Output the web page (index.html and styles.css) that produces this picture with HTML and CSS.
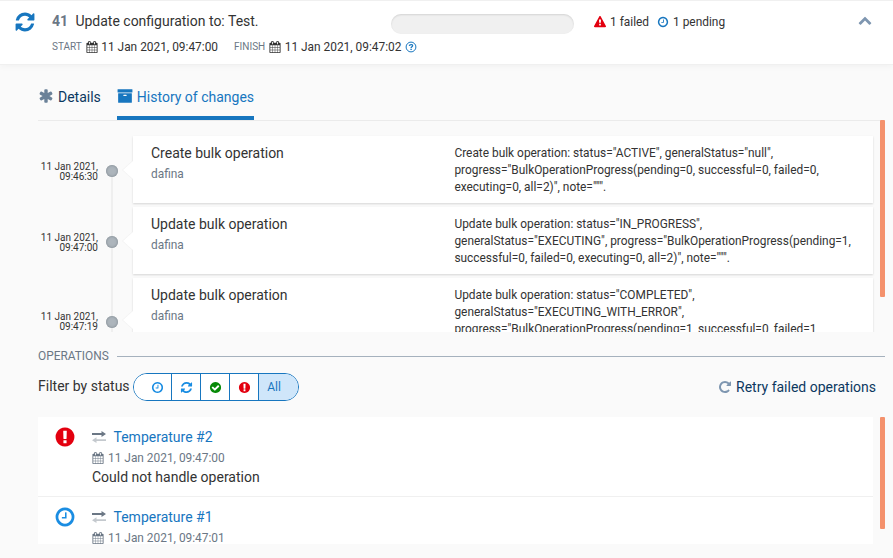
FILE: index.html
```html
<!DOCTYPE html>
<html lang="en">
<head>
<meta charset="utf-8">
<title>Bulk operations</title>
<link rel="stylesheet" href="styles.css">
</head>
<body>
<svg class="sprite" aria-hidden="true">
  <symbol id="refresh" viewBox="0 0 1792 1792"><path d="M1639 1056q0 5-1 7-64 268-268 434.5t-478 166.5q-146 0-282.5-55t-243.5-157l-129 129q-19 19-45 19t-45-19-19-45v-448q0-26 19-45t45-19h448q26 0 45 19t19 45-19 45l-137 137q71 66 161 102t187 36q134 0 250-65t186-179q11-17 53-117 8-23 30-23h192q13 0 22.5 9.5t9.5 22.5zm25-800v448q0 26-19 45t-45 19h-448q-26 0-45-19t-19-45 19-45l138-138q-148-137-349-137-134 0-250 65t-186 179q-11 17-53 117-8 23-30 23h-199q-13 0-22.5-9.5t-9.5-22.5v-7q65-268 270-434.5t480-166.5q146 0 284 55.5t245 156.5l130-129q19-19 45-19t45 19 19 45z"/></symbol>
  <symbol id="clock" viewBox="0 0 1792 1792"><path d="M1024 544v448q0 14-9 23t-23 9h-320q-14 0-23-9t-9-23v-64q0-14 9-23t23-9h224v-352q0-14 9-23t23-9h64q14 0 23 9t9 23zm416 352q0-148-73-273t-198-198-273-73-273 73-198 198-73 273 73 273 198 198 273 73 273-73 198-198 73-273zm224 0q0 209-103 385.5t-279.5 279.5-385.5 103-385.5-103-279.5-279.5-103-385.5 103-385.5 279.5-279.5 385.5-103 385.5 103 279.5 279.5 103 385.5z"/></symbol>
  <symbol id="alert" viewBox="0 0 1792 1792"><path d="M896 128q209 0 385.5 103t279.5 279.5 103 385.5-103 385.5-279.5 279.5-385.5 103-385.5-103-279.5-279.5-103-385.5 103-385.5 279.5-279.5 385.5-103zm128 1247v-190q0-14-9-23.5t-22-9.5h-192q-13 0-23 10t-10 23v190q0 13 10 23t23 10h192q13 0 22-9.5t9-23.5zm-2-344l18-621q0-12-10-18-10-8-24-8h-220q-14 0-24 8-10 6-10 18l17 621q0 10 10 17.5t24 7.5h185q14 0 23.5-7.5t10.5-17.5z"/></symbol>
  <symbol id="warning" viewBox="0 0 1792 1792"><path d="M1024 1375v-190q0-14-9.5-23.5t-22.5-9.5h-192q-13 0-22.5 9.5t-9.5 23.5v190q0 14 9.5 23.5t22.5 9.5h192q13 0 22.5-9.5t9.5-23.5zm-2-374l18-459q0-12-10-19-13-11-24-11h-220q-11 0-24 11-10 7-10 21l17 457q0 10 10 16.5t24 6.5h185q14 0 23.5-6.5t10.5-16.5zm-14-934l768 1408q35 63-2 126-17 29-46.5 46t-63.5 17h-1536q-34 0-63.5-17t-46.5-46q-37-63-2-126l768-1408q17-31 47-49t65-18 65 18 47 49z"/></symbol>
  <symbol id="check" viewBox="0 0 1792 1792"><path d="M1412 734q0-28-18-46l-91-90q-19-19-45-19t-45 19l-408 407-226-226q-19-19-45-19t-45 19l-91 90q-18 18-18 46 0 27 18 45l362 362q19 19 45 19 27 0 46-19l543-543q18-18 18-45zm252 162q0 209-103 385.5t-279.5 279.5-385.5 103-385.5-103-279.5-279.5-103-385.5 103-385.5 279.5-279.5 385.5-103 385.5 103 279.5 279.5 103 385.5z"/></symbol>
  <symbol id="repeat" viewBox="0 0 1792 1792"><path d="M1664 256v448q0 26-19 45t-45 19h-448q-42 0-59-40-17-39 14-69l138-138q-148-137-349-137-104 0-198.5 40.5t-163.5 109.5-109.5 163.5-40.5 198.5 40.5 198.5 109.5 163.5 163.5 109.5 198.5 40.5q119 0 225-52t179-147q7-10 23-12 15 0 25 9l137 138q9 8 9.5 20.5t-7.5 22.5q-109 132-264 204.5t-327 72.5q-156 0-298-61t-245-164-164-245-61-298 61-298 164-245 245-164 298-61q147 0 284.5 55.5t244.5 156.5l130-129q29-31 70-14 39 17 39 59z"/></symbol>
  <symbol id="calendar" viewBox="0 0 1792 1792"><path d="M192 1664h288v-288h-288v288zm352 0h320v-288h-320v288zm-352-352h288v-320h-288v320zm352 0h320v-320h-320v320zm-352-384h288v-288h-288v288zm736 736h320v-288h-320v288zm-384-736h320v-288h-320v288zm768 736h288v-288h-288v288zm-384-352h320v-320h-320v320zm-352-864v-288q0-13-9.5-22.5t-22.5-9.5h-64q-13 0-22.5 9.5t-9.5 22.5v288q0 13 9.5 22.5t22.5 9.5h64q13 0 22.5-9.5t9.5-22.5zm736 864h288v-320h-288v320zm-384-384h320v-288h-320v288zm384 0h288v-288h-288v288zm32-480v-288q0-13-9.5-22.5t-22.5-9.5h-64q-13 0-22.5 9.5t-9.5 22.5v288q0 13 9.5 22.5t22.5 9.5h64q13 0 22.5-9.5t9.5-22.5zm384-64v1280q0 52-38 90t-90 38h-1408q-52 0-90-38t-38-90v-1280q0-52 38-90t90-38h128v-96q0-66 47-113t113-47h64q66 0 113 47t47 113v96h384v-96q0-66 47-113t113-47h64q66 0 113 47t47 113v96h128q52 0 90 38t38 90z"/></symbol>
  <symbol id="chevron" viewBox="0 0 1792 1792"><path d="M1683 1331l-166 165q-19 19-45 19t-45-19l-531-531-531 531q-19 19-45 19t-45-19l-166-165q-19-19-19-45.5t19-45.5l742-741q19-19 45-19t45 19l742 741q19 19 19 45.5t-19 45.5z"/></symbol>
  <symbol id="asterisk" viewBox="0 0 1792 1792"><path d="M1546 1050q46 26 59.5 77.5t-12.5 97.5l-64 110q-26 46-77.5 59.5t-97.5-12.5l-266-153v307q0 52-38 90t-90 38h-128q-52 0-90-38t-38-90v-307l-266 153q-46 26-97.5 12.5t-77.5-59.5l-64-110q-26-46-12.5-97.5t59.5-77.5l266-154-266-154q-46-26-59.5-77.5t12.5-97.5l64-110q26-46 77.5-59.5t97.5 12.5l266 153v-307q0-52 38-90t90-38h128q52 0 90 38t38 90v307l266-153q46-26 97.5-12.5t77.5 59.5l64 110q26 46 12.5 97.5t-59.5 77.5l-266 154z"/></symbol>
  <symbol id="archive" viewBox="0 0 1792 1792"><path d="M1088 832q0-26-19-45t-45-19h-256q-26 0-45 19t-19 45 19 45 45 19h256q26 0 45-19t19-45zm576-192v960q0 26-19 45t-45 19h-1408q-26 0-45-19t-19-45v-960q0-26 19-45t45-19h1408q26 0 45 19t19 45zm64-448v256q0 26-19 45t-45 19h-1536q-26 0-45-19t-19-45v-256q0-26 19-45t45-19h1536q26 0 45 19t19 45z"/></symbol>
  <symbol id="question" viewBox="0 0 12 12"><circle cx="6" cy="6" r="4.9" fill="none" stroke="currentColor" stroke-width="1"/><path d="M4.3 4.8C4.5 3.1 7.7 3.1 7.6 4.8C7.6 5.8 6.1 5.8 6.1 7" fill="none" stroke="currentColor" stroke-width="1.3"/><path d="M5.4 7.7h1.4v1.3h-1.4z"/></symbol>
  <symbol id="exchange" viewBox="0 0 14 12"><path d="M0 2h9.5V0L14 3 9.5 6V4H0z"/><path class="faded" d="M14 8.3H4.5V6.3L0 9.2l4.5 2.8V10H14z"/></symbol>
</svg>

<header class="op-header">
  <svg class="icon op-icon"><use href="#refresh"/></svg>
  <div class="op-main">
    <div class="op-title"><b>41</b><span>Update configuration to: Test.</span></div>
    <div class="op-dates">
      <span class="caption">START</span><svg class="icon cal"><use href="#calendar"/></svg><span class="start">11 Jan 2021, 09:47:00</span>
      <span class="caption">FINISH</span><svg class="icon cal"><use href="#calendar"/></svg><span>11 Jan 2021, 09:47:02</span>
      <svg class="icon help"><use href="#question"/></svg>
    </div>
  </div>
  <div class="progress"></div>
  <div class="summary">
    <svg class="icon danger"><use href="#warning"/></svg><span class="failed">1 failed</span>
    <svg class="icon info"><use href="#clock"/></svg><span>1 pending</span>
  </div>
  <svg class="icon collapse"><use href="#chevron"/></svg>
</header>

<main class="content">
  <nav class="tabs">
    <a class="tab"><svg class="icon"><use href="#asterisk"/></svg>Details</a>
    <a class="tab active"><svg class="icon"><use href="#archive"/></svg>History of changes</a>
  </nav>

  <section class="scroll-area history">
    <div class="timeline">
      <article class="event">
        <time>11 Jan 2021, 09:46:30</time><div class="rail"><i class="dot"></i></div>
        <div class="card"><div class="who"><h4>Create bulk operation</h4><p>dafina</p></div>
          <p class="detail">Create bulk operation: status="ACTIVE", generalStatus="null", progress="BulkOperationProgress(pending=0, successful=0, failed=0, executing=0, all=2)", note=""".</p></div>
      </article>
      <article class="event">
        <time>11 Jan 2021, 09:47:00</time><div class="rail"><i class="dot"></i></div>
        <div class="card"><div class="who"><h4>Update bulk operation</h4><p>dafina</p></div>
          <p class="detail">Update bulk operation: status="IN_PROGRESS", generalStatus="EXECUTING", progress="BulkOperationProgress(pending=1, successful=0, failed=0, executing=0, all=2)", note=""".</p></div>
      </article>
      <article class="event tall">
        <time>11 Jan 2021, 09:47:19</time><div class="rail"><i class="dot"></i></div>
        <div class="card"><div class="who"><h4>Update bulk operation</h4><p>dafina</p></div>
          <p class="detail">Update bulk operation: status="COMPLETED", generalStatus="EXECUTING_WITH_ERROR", progress="BulkOperationProgress(pending=1, successful=0, failed=1,</p></div>
      </article>
    </div>
    <div class="thumb"></div>
  </section>

  <div class="legend"><span>OPERATIONS</span></div>

  <div class="filter-row">
    <span class="filter-label">Filter by status</span>
    <div class="btn-group">
      <button class="first"><svg class="icon blue"><use href="#clock"/></svg></button>
      <button><svg class="icon blue"><use href="#refresh"/></svg></button>
      <button><svg class="icon green"><use href="#check"/></svg></button>
      <button><svg class="icon danger"><use href="#alert"/></svg></button>
      <button class="all">All</button>
    </div>
    <a class="retry"><svg class="icon"><use href="#repeat"/></svg>Retry failed operations</a>
  </div>

  <section class="scroll-area operations">
    <div class="list">
      <div class="item">
        <svg class="icon status danger"><use href="#alert"/></svg>
        <div class="item-body">
          <div class="name"><svg class="exchange"><use href="#exchange"/></svg><a>Temperature #2</a></div>
          <div class="date"><svg class="icon cal"><use href="#calendar"/></svg>11 Jan 2021, 09:47:00</div>
          <div class="message">Could not handle operation</div>
        </div>
      </div>
      <div class="item">
        <svg class="icon status blue"><use href="#clock"/></svg>
        <div class="item-body">
          <div class="name"><svg class="exchange"><use href="#exchange"/></svg><a>Temperature #1</a></div>
          <div class="date"><svg class="icon cal"><use href="#calendar"/></svg>11 Jan 2021, 09:47:01</div>
        </div>
      </div>
    </div>
    <div class="thumb"></div>
  </section>
</main>
</body>
</html>
```
FILE: styles.css
```css
* { box-sizing: border-box; }
body {
  margin: 0;
  width: 893px;
  height: 558px;
  overflow: hidden;
  background: #fafafa;
  color: #333;
  font: 14px/20px Roboto, sans-serif;
}
h4, p { margin: 0; font-size: 14px; font-weight: 400; }
.sprite { display: none; }
.icon { width: 12px; height: 12px; fill: currentColor; flex: none; display: block; }
.danger { color: #e3000f; }
.blue { color: #1a8de2; }
.info { color: #1776bf; }
.green { color: #078a07; }

.op-header {
  display: flex;
  height: 65px;
  padding: 10px 20px 0 14px;
  background: #fff;
  border-top: 1px solid #f0f0f0;
  border-bottom: 1px solid #f0f0f0;
  box-shadow: 0 2px 6px rgba(0, 0, 0, .035);
}
.op-icon { width: 22px; height: 22px; color: #1776bf; }
.op-main { width: 339px; margin-left: 16px; }
.op-title { display: flex; gap: 7.5px; }
.op-title b { font-weight: 700; color: #6b7785; letter-spacing: -.1px; }
.op-dates { display: flex; align-items: center; margin-top: 6px; font-size: 11.9px; white-space: nowrap; }
.caption { font-size: 10px; color: #6b7785; margin-right: 4px; }
.cal { margin-right: 4px; }
.op-dates .cal { margin-right: 3.5px; }
.start { margin-right: 16px; }
.help { margin-left: 4px; color: #1776bf; }
.progress {
  width: 183px;
  height: 20px;
  margin-top: 3px;
  border-radius: 10px;
  background: #f0f0f0;
  box-shadow: inset 0 1px 2px rgba(0, 0, 0, .12);
}
.summary { display: flex; align-items: center; height: 22px; margin-left: 20px; font-size: 11.9px; }
.summary .icon { margin-right: 4px; }
.failed { margin-right: 8px; }
.collapse { width: 14px; height: 14px; margin: 2px 1px 0 auto; color: #7e96b0; }

.content { padding: 0 8px 0 38px; }
.tabs { display: flex; gap: 16px; height: 56px; border-bottom: 1px solid #ebebeb; }
.tab { display: flex; height: 55px; padding-top: 22px; gap: 4px; color: #0b385f; }
.tab .icon { width: 16px; height: 16px; margin-top: 1px; color: #6b8299; }
.tab.active { color: #1776bf; border-bottom: 4px solid #1776bf; }
.tab.active .icon { color: #1776bf; }

.scroll-area { display: flex; gap: 7px; overflow: hidden; }
.thumb { width: 5px; border-radius: 1px; background: #f4916c; }
.history { height: 212px; margin-top: -1px; }
.history .thumb { height: 177px; }
.timeline { width: 835px; padding-top: 16px; }
.event { display: flex; height: 71px; }
.event.tall { height: 88px; }
.event time { width: 60px; height: 20px; margin-top: 26px; font-size: 10px; line-height: 10px; text-align: right; }
.event.tall time { margin-top: 34px; }
.rail {
  width: 28px;
  padding: 29px 0 0 8px;
  background: linear-gradient(#efefef, #efefef) 13px 0 / 2px 100% no-repeat;
}
.event:first-child .rail { background-position: 13px 35px; }
.event.tall .rail { padding-top: 38px; }
.dot { display: block; width: 12px; height: 12px; border-radius: 50%; background: #adb5bc; box-shadow: inset 0 0 2px 1px #929ba2; }
.card {
  position: relative;
  display: flex;
  width: 740px;
  height: 67px;
  margin-left: 7px;
  padding: 7px 18px;
  background: #fff;
  box-shadow: 0 1px 2px rgba(0, 0, 0, .15);
}
.tall .card { height: 84px; }
.card::before {
  content: "";
  position: absolute;
  left: -10px;
  top: calc(50% - 9px);
  border: solid transparent;
  border-width: 9px 10px 9px 0;
  border-right-color: #fff;
  filter: drop-shadow(-1px 0 0 #f2f2f2);
}
.who { width: 304.5px; }
.who p { margin-top: 1px; font-size: 11.9px; color: #6b7785; }
.detail { width: 402px; margin-top: 2px; font-size: 11.9px; line-height: 17px; }

.legend { display: flex; align-items: center; gap: 8px; margin-top: 14px; height: 20px; font-size: 11.9px; color: #6b7785; }
.legend::after { content: ""; flex: 1; height: 1px; background: #a5b1bd; }
.filter-row { display: flex; align-items: center; margin-top: 7px; height: 28px; }
.filter-label { width: 95px; margin-top: -2px; white-space: nowrap; }
.btn-group { display: flex; width: 166px; height: 28px; border: 1px solid #1776bf; border-radius: 14px; overflow: hidden; background: #fff; }
.btn-group button {
  display: flex;
  align-items: center;
  justify-content: center;
  width: 29px;
  padding: 0;
  border: 0;
  border-right: 1px solid #1776bf;
  background: #fff;
  font: 12px Roboto, sans-serif;
  color: #1776bf;
}
.btn-group .icon { width: 13px; height: 13px; margin-top: 1px; }
.btn-group .first { width: 38px; padding-left: 9px; }
.btn-group .all { flex: 1; padding-right: 9px; border: 0; background: #cfe6fa; }
.retry { display: flex; align-items: center; gap: 4px; margin: 0 9px 0 auto; color: #0b385f; }
.retry .icon { width: 14px; height: 14px; color: #7e96b0; }

.operations { height: 127px; margin-top: 16px; }
.operations .thumb { height: 112px; }
.list { width: 835px; background: #fff; }
.item { display: flex; height: 80px; padding: 10px 16px; border-bottom: 1px solid #f0f0f0; }
.status { width: 22px; height: 22px; margin-top: -1px; }
.item-body { margin-left: 16px; }
.name { display: flex; align-items: center; gap: 7.5px; color: #1776bf; }
.exchange { width: 14px; height: 12px; fill: #6b7785; }
.faded { opacity: .4; }
.date { display: flex; align-items: center; height: 20px; padding-top: 1px; font-size: 11.9px; color: #6b7785; }
```
